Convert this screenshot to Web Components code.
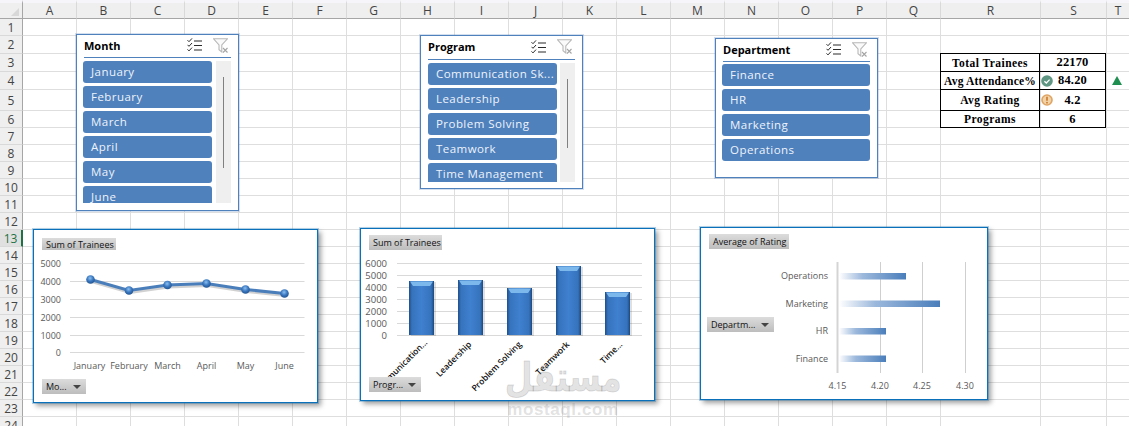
<!DOCTYPE html>
<html>
<head>
<meta charset="utf-8">
<title>Training dashboard</title>
<style>
  html, body { margin: 0; background: #fff; }
  body { width: 1129px; height: 426px; overflow: hidden; }
</style>
</head>
<body>
<x-sheet>
  <x-slicer x="76" y="34" w="163" h="177" heading="Month" list-w="129" list-h="142" thumb-top="16" thumb-h="91" gap="4" scroll
    items="January|February|March|April|May|June"></x-slicer>
  <x-slicer x="420" y="35" w="163" h="154" heading="Program" head-h="24" inset="7" list-w="129" list-h="119" thumb-top="16" thumb-h="69" gap="3" scroll
    items="Communication Sk...|Leadership|Problem Solving|Teamwork|Time Management"></x-slicer>
  <x-slicer x="715" y="38" w="163" h="140" heading="Department" list-top="2" list-w="148" list-h="100"
    items="Finance|HR|Marketing|Operations"></x-slicer>

  <x-kpi-table></x-kpi-table>

  <x-line-chart x="33" y="229" w="285" h="174">
    <x-field style="margin-top:8px;height:12px;width:74px">Sum of Trainees</x-field>
    <x-field filter style="width:44px">Mo...</x-field>
  </x-line-chart>
  <x-bar-chart x="360" y="228" w="295" h="173">
    <x-field style="margin-top:6px;width:73px">Sum of Trainees</x-field>
    <x-field filter style="width:52px">Progr...</x-field>
  </x-bar-chart>
  <x-rating-chart x="700" y="227" w="288" h="173">
    <x-field style="margin-top:6px;width:80px">Average of Rating</x-field>
    <x-field filter style="width:67px;margin-top:68px;margin-bottom:auto;margin-left:-2px">Departm...</x-field>
  </x-rating-chart>

  <x-watermark></x-watermark>
</x-sheet>

<script>
const UI_FONT = '"Open Sans", "Noto Sans", sans-serif';

// ---- worksheet grid with headers, floating things go in the slot
const COLS = ['A','B','C','D','E','F','G','H','I','J','K','L','M','N','O','P','Q','R','S','T'];
const COL_W = [54,54,54,54,54,54,54,54,54,54,54,54,54,54,54,54,54,100,66,23];
const ROW_H = [17,18,18,18,21,17,17,17,17,17,17,17,17,17,17,17,17,17,17,17,17,17,17,17];

class XSheet extends HTMLElement {
  constructor() {
    super();
    const root = this.attachShadow({ mode: 'open' });
    let cells = '<div class="corner"><i></i></div>';
    COLS.forEach(c => { cells += `<div class="col">${c}</div>`; });
    ROW_H.forEach((_, r) => {
      cells += `<div class="row${r === 12 ? ' active' : ''}">${r + 1}</div>`;
      COLS.forEach(() => { cells += '<div class="cell"></div>'; });
    });
    root.innerHTML = `
      <style>
        :host { display: block; position: relative; width: 1129px; height: 426px; overflow: hidden; background: #fff; font-family: ${UI_FONT}; }
        .grid {
          display: grid;
          grid-template-columns: 23px ${COL_W.map(w => w + 'px').join(' ')};
          grid-template-rows: 19px ${ROW_H.map(h => h + 'px').join(' ')};
        }
        .grid > div { box-sizing: border-box; }
        .corner { background: #efefef; border-top: 3px solid #f6f6fa; border-bottom: 1px solid #a6a6a6; border-right: 1px solid #a6a6a6; position: relative; }
        .corner i { position: absolute; right: 3px; bottom: 2px; width: 0; height: 0; border-left: 8px solid transparent; border-bottom: 8px solid #d8d8d8; }
        .col {
          background: #efefef; border-top: 3px solid #f6f6fa; border-bottom: 1px solid #a6a6a6; border-right: 1px solid #d9d9d9;
          color: #444; font-size: 12px; line-height: 15px; text-align: center;
        }
        .row {
          background: #efefef; border-bottom: 1px solid #d9d9d9; border-right: 1px solid #a6a6a6;
          color: #444; font-size: 12px; line-height: 15px; display: flex; align-items: center; justify-content: center;
        }
        .row.active { background: #e0e0e0; color: #1f7244; border-right: 2px solid #1f7244; }
        .cell { border-right: 1px solid #dedede; border-bottom: 1px solid #dedede; }
      </style>
      <div class="grid">${cells}</div>
      <slot></slot>`;
  }
}
customElements.define('x-sheet', XSheet);

// ---- slicer
const CHECKLIST_ICON = `<svg width="15" height="14" viewBox="0 0 15 14" fill="none" stroke="#2b2b2b" stroke-width="1">
  <path d="M.5 2.2l1.5 1.5L5 .4M.5 6.8l1.5 1.5L5 5M.5 11.4L2 12.9l3-3.3"/>
  <path d="M7 3h8M7 7.5h8M7 12h8" stroke-width="1.2"/></svg>`;
const CLEAR_ICON = `<svg width="15" height="15" viewBox="0 0 15 15" fill="none" stroke="#b8b8b8" stroke-width="1.1">
  <path d="M.6 .8h13.8L8.8 7v7L6 11.8V7z" fill="#fafafa"/>
  <path d="M10 10l4.5 4.5M14.5 10L10 14.5" stroke="#a4a4a4"/></svg>`;

class XSlicer extends HTMLElement {
  connectedCallback() {
    const a = (n, d) => this.hasAttribute(n) ? this.getAttribute(n) : d;
    const root = this.shadowRoot || this.attachShadow({ mode: 'open' });
    const items = a('items').split('|').map(t => `<div class="item">${t}</div>`).join('');
    const scroll = this.hasAttribute('scroll')
      ? `<div class="bar"><i style="margin-top:${a('thumb-top')}px;height:${a('thumb-h')}px"></i></div>` : '';
    const inset = +a('inset', 6);
    root.innerHTML = `
      <style>
        :host {
          display: block; position: absolute; box-sizing: border-box; background: #fff;
          left: ${a('x')}px; top: ${a('y')}px; width: ${a('w')}px; height: ${a('h')}px;
          border: 1px solid #4f81bd; outline: 1px solid rgba(79,129,189,.25); padding: 0 7px 0 ${inset}px; color: #000;
        }
        .head {
          display: flex; align-items: center; box-sizing: border-box; height: ${a('head-h', 23)}px;
          margin-left: ${7 - inset}px; padding: 0 3px 2px 0; border-bottom: 1px solid #4f81bd;
        }
        .title { flex: 1; font-size: 11px; font-weight: 700; }
        .head svg { display: block; flex: none; }
        .head svg:last-child { margin-left: 11px; }
        .body { display: flex; gap: ${a('gap', 4)}px; margin-top: ${a('list-top', 3)}px; }
        .list { flex: none; width: ${a('list-w')}px; height: ${a('list-h')}px; overflow: hidden; display: flex; flex-direction: column; gap: 3px; }
        .item {
          flex: none; box-sizing: border-box; height: 22px; background: #4f81bd; border-radius: 3px;
          color: #eef3fa; font-size: 11.5px; line-height: 21px; padding-left: 8px; letter-spacing: .45px; white-space: nowrap;
        }
        .bar { flex: none; width: 15px; height: ${a('list-h')}px; background: #efefef; display: flex; justify-content: center; }
        .bar i { display: block; width: 1px; background: #808080; }
      </style>
      <div class="head"><span class="title">${a('heading')}</span>${CHECKLIST_ICON}${CLEAR_ICON}</div>
      <div class="body"><div class="list">${items}</div>${scroll}</div>`;
  }
}
customElements.define('x-slicer', XSlicer);

// ---- KPI table, sits on cells R3:S6
class XKpiTable extends HTMLElement {
  constructor() {
    super();
    this.attachShadow({ mode: 'open' }).innerHTML = `
      <style>
        :host { display: block; position: absolute; left: 940px; top: 53px; font-family: "Liberation Serif", serif; font-weight: 700; color: #000; }
        table { border-collapse: collapse; table-layout: fixed; width: 189px; font-size: 11.5px; letter-spacing: .45px; }
        td { padding: 0; text-align: center; border: 1px solid #000; white-space: nowrap; position: relative; }
        td.val { font-size: 12.5px; letter-spacing: .15px; }
        td.free { border: 0; }
        td svg { display: block; }
        td.ico svg { position: absolute; left: 1px; top: 50%; margin-top: -6px; }
        td.free svg { margin-left: 6px; }
        .att td:first-child { letter-spacing: .2px; }
      </style>
      <table>
        <colgroup><col style="width:99px"><col style="width:66px"><col style="width:24px"></colgroup>
        <tr style="height:18px"><td>Total Trainees</td><td class="val">22170</td><td class="free"></td></tr>
        <tr style="height:18px" class="att"><td>Avg Attendance%</td>
          <td class="val ico"><svg width="12" height="12" viewBox="0 0 12 12"><circle cx="6" cy="6" r="5.8" fill="#5f9684"/><path d="M3.4 6.2l1.9 1.8 3.3-3.4" fill="none" stroke="#fff" stroke-width="1.3"/></svg>84.20</td>
          <td class="free"><svg width="10" height="9" viewBox="0 0 10 9"><path d="M5 0l5 9H0z" fill="#1e8f50"/></svg></td></tr>
        <tr style="height:21px"><td>Avg Rating</td>
          <td class="val ico"><svg width="12" height="12" viewBox="0 0 12 12"><circle cx="6" cy="6" r="5.8" fill="#dfa564"/><circle cx="6" cy="6" r="4.2" fill="#f2d3a8"/><path d="M6 2.8v4" stroke="#c9772a" stroke-width="1.6"/><circle cx="6" cy="8.7" r=".9" fill="#c9772a"/></svg>4.2</td>
          <td class="free"></td></tr>
        <tr style="height:17px"><td>Programs</td><td class="val">6</td><td class="free"></td></tr>
      </table>`;
  }
}
customElements.define('x-kpi-table', XKpiTable);

// ---- grey pivot field button
class XField extends HTMLElement {
  constructor() {
    super();
    this.attachShadow({ mode: 'open' }).innerHTML = `
      <style>
        :host {
          display: flex; align-items: center; justify-content: space-between; box-sizing: border-box; flex: none;
          height: 15px; padding: 0 5px 0 4px; margin-left: 0; font-size: 9px; color: #111; white-space: nowrap;
          background: linear-gradient(#dcdcdc, #bdbdbd);
        }
        :host([filter]) { margin-top: auto; margin-bottom: 8px; }
        .arrow { display: none; width: 0; height: 0; border-left: 4px solid transparent; border-right: 4px solid transparent; border-top: 4px solid #444; }
        :host([filter]) .arrow { display: block; }
      </style>
      <slot></slot><span class="arrow"></span>`;
  }
}
customElements.define('x-field', XField);

// ---- chart frame: plot() returns svg in sheet coordinates
class XChart extends HTMLElement {
  connectedCallback() {
    const [x, y, w, h] = ['x','y','w','h'].map(n => +this.getAttribute(n));
    const root = this.shadowRoot || this.attachShadow({ mode: 'open' });
    root.innerHTML = `
      <style>
        :host {
          display: block; position: absolute; box-sizing: border-box; background: #fff;
          left: ${x}px; top: ${y}px; width: ${w}px; height: ${h}px;
          border: 1px solid #0a70b9; outline: 1px solid rgba(10,112,185,.3); box-shadow: 3px 3px 5px rgba(0,0,0,.38);
        }
        svg { position: absolute; left: -1px; top: -1px; font-family: ${UI_FONT}; font-size: 9px; fill: #595959; }
        .fields { position: relative; box-sizing: border-box; height: 100%; padding-left: 8px; display: flex; flex-direction: column; align-items: flex-start; }
      </style>
      <svg width="${w}" height="${h}" viewBox="${x} ${y} ${w} ${h}">${this.plot()}</svg>
      <div class="fields"><slot></slot></div>`;
  }
}

const hLines = (ys, x1, x2) => ys.map(y => `<line x1="${x1}" x2="${x2}" y1="${y}" y2="${y}" stroke="#d9d9d9"/>`).join('');

class XLineChart extends XChart {
  plot() {
    const ys = [263.5, 281.5, 299.5, 317.5, 335.5, 352.5];
    const ticks = ['5000','4000','3000','2000','1000','0'];
    const pts = [[90.5,279.5],[129,290.5],[167.5,285],[206.5,283.5],[245.5,289.5],[284.5,293.5]];
    const names = ['January','February','March','April','May','June'];
    const line = pts.map(p => p.join(',')).join(' ');
    return `
      <defs><radialGradient id="ball" cx=".45" cy=".35" r=".7">
        <stop offset="0" stop-color="#8cc0f0"/><stop offset=".5" stop-color="#3a78c0"/><stop offset="1" stop-color="#1d4f8c"/>
      </radialGradient></defs>
      ${hLines(ys, 70, 304.5)}
      ${ticks.map((t, i) => `<text x="61" y="${ys[i] + 3.5}" text-anchor="end">${t}</text>`).join('')}
      <polyline points="${line}" fill="none" stroke="rgba(0,0,0,.18)" stroke-width="3" transform="translate(1,2)"/>
      <polyline points="${line}" fill="none" stroke="#4a7ebb" stroke-width="3"/>
      ${pts.map(p => `<circle cx="${p[0]}" cy="${p[1]}" r="4.3" fill="url(#ball)"/>`).join('')}
      ${names.map((n, i) => `<text x="${pts[i][0] - (i === 0 ? 1 : 0)}" y="369" text-anchor="middle">${n}</text>`).join('')}`;
  }
}
customElements.define('x-line-chart', XLineChart);

class XBarChart extends XChart {
  plot() {
    const ys = [263.5, 275.5, 287.5, 299.5, 311.5, 323.5, 335.5];
    const ticks = ['6000','5000','4000','3000','2000','1000','0'];
    const bars = [[409,281,'Communication...',428,343,1],[458,280,'Leadership',472,345],[507,288,'Problem Solving',522,345],[556,266,'Teamwork',570,345],[605,292,'Time...',623,345]];
    return `
      <defs>
        <linearGradient id="side"><stop offset="0" stop-color="#1f4f8a"/><stop offset=".12" stop-color="#3673bd"/><stop offset=".5" stop-color="#3f80cf"/><stop offset=".88" stop-color="#3673bd"/><stop offset="1" stop-color="#1c4980"/></linearGradient>
        <clipPath id="above"><rect x="360" y="228" width="295" height="149"/></clipPath>
      </defs>
      ${hLines(ys, 397, 642)}
      ${ticks.map((t, i) => `<text x="387" y="${ys[i] + 3.5}" text-anchor="end" font-size="9.5">${t}</text>`).join('')}
      ${bars.map(([x, top, name, ex, ey, cut]) => `
        <rect x="${x + 2}" y="${top + 1}" width="25" height="${335 - top}" fill="rgba(0,0,0,.12)"/>
        <rect x="${x}" y="${top}" width="25" height="${335 - top}" fill="url(#side)"/>
        <polygon points="${x + 1},${top + .5} ${x + 24},${top + .5} ${x + 21},${top + 5} ${x + 4},${top + 5}" fill="#7db8ec"/>
        <g ${cut ? 'clip-path="url(#above)"' : ''}><text transform="translate(${ex},${ey}) rotate(-45)" text-anchor="end" font-size="8.5" font-weight="600" style="fill:#111">${name}</text></g>`).join('')}`;
  }
}
customElements.define('x-bar-chart', XBarChart);

class XRatingChart extends XChart {
  plot() {
    const rows = [['Operations',273,906,279.5],['Marketing',300.5,940,307],['HR',328,886,334.5],['Finance',355.5,886,362]];
    const axis = [['4.15',837.5],['4.20',880],['4.25',922],['4.30',965]];
    return `
      <defs><linearGradient id="fade"><stop offset="0" stop-color="#fff"/><stop offset=".35" stop-color="#9db9dc"/><stop offset="1" stop-color="#4a7ebb"/></linearGradient></defs>
      <line x1="837.5" x2="837.5" y1="262" y2="373" stroke="#d4d4d4" stroke-width="2"/>
      ${axis.slice(1).map(a => `<line x1="${a[1] + .5}" x2="${a[1] + .5}" y1="262" y2="373" stroke="#cfcfcf"/>`).join('')}
      ${rows.map(([n, y, x2, y2]) => `
        <rect x="839" y="${y}" width="${x2 - 839}" height="${y2 - y}" fill="url(#fade)"/>
        <text x="828" y="${(y + y2) / 2 + 3}" text-anchor="end">${n}</text>`).join('')}
      ${axis.map(a => `<text x="${a[1]}" y="389" text-anchor="middle">${a[0]}</text>`).join('')}`;
  }
}
customElements.define('x-rating-chart', XRatingChart);

// ---- site watermark over everything
class XWatermark extends HTMLElement {
  constructor() {
    super();
    this.attachShadow({ mode: 'open' }).innerHTML = `
      <style>
        :host {
          display: flex; flex-direction: column; align-items: center; position: absolute; left: 499px; top: 352px; width: 128px;
          color: rgba(130,130,130,.24); pointer-events: none; white-space: nowrap;
        }
        .ar { font-family: "DejaVu Sans", "Noto Sans", sans-serif; font-weight: 700; font-size: 40px; line-height: 50px; transform: scaleX(.8); -webkit-text-stroke: 1px rgba(130,130,130,.24); }
        .la { font-family: "Liberation Sans", sans-serif; font-weight: 700; font-size: 17px; line-height: 16px; letter-spacing: .6px; }
      </style>
      <div class="ar" lang="ar" dir="rtl">مستقل</div>
      <div class="la">mostaql.com</div>`;
  }
}
customElements.define('x-watermark', XWatermark);
</script>
</body>
</html>
